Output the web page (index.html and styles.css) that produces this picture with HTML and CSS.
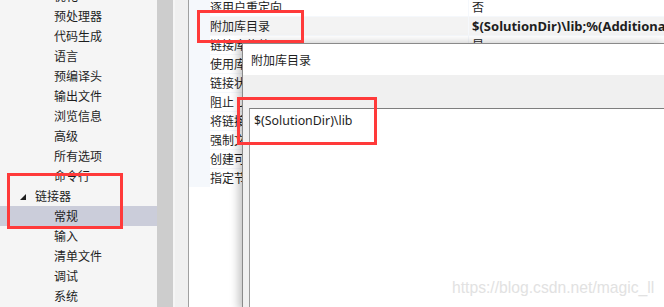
FILE: index.html
```html
<!DOCTYPE html>
<html>
<head>
<meta charset="utf-8">
<link rel="stylesheet" href="styles.css">
</head>
<body>
<div class="page">
  <div class="tree">
    <div class="item">优化</div>
    <div class="item">预处理器</div>
    <div class="item">代码生成</div>
    <div class="item">语言</div>
    <div class="item">预编译头</div>
    <div class="item">输出文件</div>
    <div class="item">浏览信息</div>
    <div class="item">高级</div>
    <div class="item">所有选项</div>
    <div class="item">命令行</div>
    <div class="item group"><span class="tri"></span>链接器</div>
    <div class="item selected">常规</div>
    <div class="item">输入</div>
    <div class="item">清单文件</div>
    <div class="item">调试</div>
    <div class="item">系统</div>
  </div>
  <div class="scroll"></div>
  <div class="gap"></div>
  <div class="frame"></div>
  <div class="main">
    <div class="grid">
      <div class="row"><div class="gutter"></div><div class="name">逐用户重定向</div><div class="value">否</div></div>
      <div class="row current"><div class="gutter"></div><div class="name">附加库目录</div><div class="value bold">$(SolutionDir)\lib;%(AdditionalLibraryDirectories)</div></div>
      <div class="row"><div class="gutter"></div><div class="name">链接库依赖项</div><div class="value">是</div></div>
      <div class="row"><div class="gutter"></div><div class="name">使用库依赖项输入</div><div class="value">否</div></div>
      <div class="row"><div class="gutter"></div><div class="name">链接状态</div><div class="value"></div></div>
      <div class="row"><div class="gutter"></div><div class="name">阻止 DLL 绑定</div><div class="value"></div></div>
      <div class="row"><div class="gutter"></div><div class="name">将链接器警告视为错误</div><div class="value"></div></div>
      <div class="row"><div class="gutter"></div><div class="name">强制文件输出</div><div class="value"></div></div>
      <div class="row"><div class="gutter"></div><div class="name">创建可热修补映像</div><div class="value"></div></div>
      <div class="row"><div class="gutter"></div><div class="name">指定节特性</div><div class="value"></div></div>
    </div>
    <div class="dialog">
      <div class="title">附加库目录</div>
      <div class="toolbar"></div>
      <div class="body">
        <div class="editor">$(SolutionDir)\lib</div>
      </div>
    </div>
  </div>
</div>
<div class="mark box1"></div>
<div class="mark box2"></div>
<div class="mark box3"></div>
<div class="watermark">https://blog.csdn.net/magic_ll</div>
</body>
</html>
```
FILE: styles.css
```css
html, body {
  margin: 0;
  padding: 0;
}
body {
  width: 664px;
  height: 307px;
  overflow: hidden;
  position: relative;
  background: #fff;
  font-family: "Noto Sans CJK SC", "Noto Sans", sans-serif;
  font-size: 12px;
  color: #1e1e1e;
}
.page {
  display: flex;
  height: 307px;
}
.tree {
  width: 157px;
  background: #f5f5f5;
  margin-top: -14px;
  height: 321px;
  flex-shrink: 0;
}
.item {
  height: 20px;
  line-height: 20px;
  padding-left: 54px;
  white-space: nowrap;
}
.item.group {
  padding-left: 20px;
  display: flex;
  align-items: center;
}
.tri {
  width: 0;
  height: 0;
  border-left: 6px solid transparent;
  border-bottom: 6px solid #1e1e1e;
  margin-right: 9px;
  margin-top: 2px;
}
.item.selected {
  background: #cbcdda;
}
.scroll {
  width: 16px;
  background: #cdcdcd;
  flex-shrink: 0;
}
.gap {
  width: 2px;
  background: #f5f5f5;
  flex-shrink: 0;
}
.frame {
  width: 13px;
  background: #f0f0f0;
  border-right: 1px solid #a0a0a0;
  flex-shrink: 0;
}
.main {
  flex: 1;
  position: relative;
  background: #fff;
  overflow: hidden;
}
.grid {
  margin-top: -2px;
  background: #f5f8fc;
}
.row {
  display: flex;
  height: 18px;
  margin-bottom: 1px;
  line-height: 18px;
}
.gutter {
  width: 21px;
  background: #f5f8fc;
  flex-shrink: 0;
}
.name {
  width: 258px;
  background: #fff;
  margin-right: 1px;
  white-space: nowrap;
  overflow: hidden;
  flex-shrink: 0;
}
.value {
  flex: 1;
  background: #fff;
  padding-left: 3px;
  white-space: nowrap;
  overflow: hidden;
}
.row.current .name,
.row.current .value {
  background: #f3f3f3;
}
.bold {
  font-family: "Noto Sans", sans-serif;
  font-weight: bold;
  font-size: 13px;
}
.dialog {
  position: absolute;
  left: 53px;
  top: 43px;
  right: -4px;
  bottom: -4px;
  background: #f0f0f0;
  border-top: 1px solid #8a8a8a;
  border-left: 1px solid #8a8a8a;
  box-shadow: -4px -1px 8px rgba(0, 0, 0, 0.22);
  display: flex;
  flex-direction: column;
}
.title {
  height: 31px;
  line-height: 31px;
  background: #fff;
  padding-left: 8px;
}
.toolbar {
  height: 33px;
  background: #f0f0f0;
}
.body {
  flex: 1;
  padding-left: 6px;
  display: flex;
}
.editor {
  flex: 1;
  background: #fff;
  border-top: 1px solid #7e7e7e;
  border-left: 1px solid #9a9a9a;
  padding: 4px 4px;
  line-height: 16px;
  font-family: "Noto Sans", sans-serif;
  font-size: 12.4px;
}
.mark {
  position: absolute;
  border: 3px solid #ff3a3a;
  box-sizing: border-box;
}
.box1 { left: 197px; top: 10px; width: 107px; height: 33px; }
.box2 { left: 7px; top: 173px; width: 116px; height: 56px; }
.box3 { left: 237px; top: 97px; width: 140px; height: 48px; }
.watermark {
  position: absolute;
  left: 452px;
  top: 279px;
  font-family: "Liberation Sans", Arial, sans-serif;
  font-size: 15.7px;
  color: #e2e2e2;
  white-space: nowrap;
}
```
